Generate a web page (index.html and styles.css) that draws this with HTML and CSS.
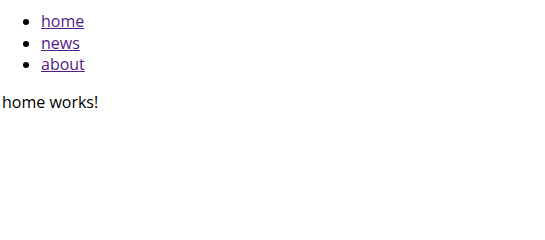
FILE: index.html
```html
<!DOCTYPE html>
<html>
<head>
<meta charset="utf-8">
<link rel="stylesheet" href="styles.css">
</head>
<body class="page">
<ul class="nav">
<li><a class="nav-link" href="#home">home</a></li>
<li><a class="nav-link" href="#news">news</a></li>
<li><a class="nav-link" href="#about">about</a></li>
</ul>
<div class="content">home works!</div>
</body>
</html>
```
FILE: styles.css
```css
.page {
  margin: 0;
  padding-left: 2px;
  font-family: "Open Sans", "Noto Sans", sans-serif;
  font-size: 16px;
  line-height: 21.5px;
  color: #000;
  background: #fff;
}
.nav {
  margin: 11px 0 16px;
  padding-left: 39px;
}
.nav-link {
  color: #551a8b;
}
.content {
  margin: 0;
}
```
